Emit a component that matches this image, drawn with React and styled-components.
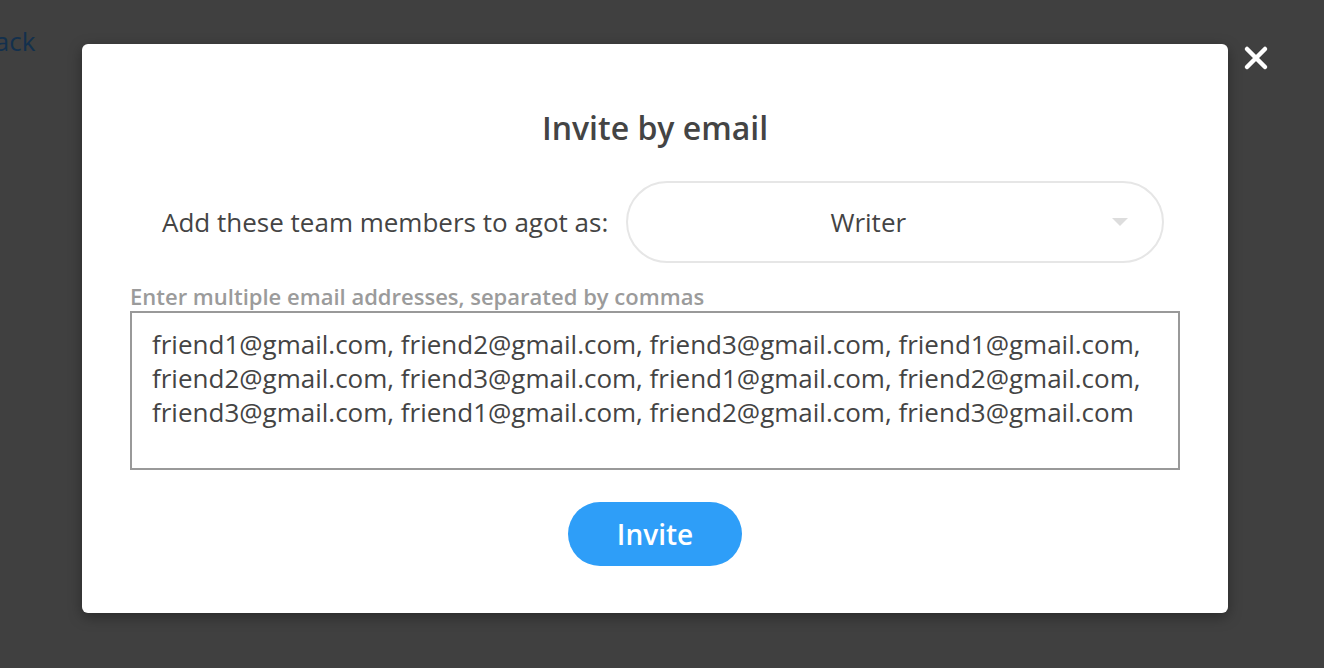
import styled, { createGlobalStyle } from "styled-components";

const GlobalStyle = createGlobalStyle`
  html, body {
    margin: 0;
    padding: 0;
    background: #404040;
    font-family: "Open Sans", "Liberation Sans", sans-serif;
  }
`;

const Page = styled.div`
  position: relative;
  width: 1324px;
  height: 668px;
  overflow: hidden;
  background: #404040;
`;

const BackLink = styled.div`
  position: absolute;
  left: -22px;
  top: 23px;
  font-size: 26px;
  color: #13304d;
`;

const Overlay = styled.div`
  position: absolute;
  inset: 0;
  display: flex;
  align-items: flex-start;
  padding: 44px 0 0 82px;
`;

const Modal = styled.div`
  width: 1146px;
  height: 569px;
  box-sizing: border-box;
  background: #fff;
  border-radius: 6px;
  box-shadow: 0 4px 14px rgb(0 0 0 / 0.35);
  padding: 60px 48px 0;
  display: flex;
  flex-direction: column;
  align-items: center;
`;

const Title = styled.h2`
  margin: 0;
  font-size: 32px;
  font-weight: 600;
  color: #444;
  line-height: 48px;
`;

const RoleRow = styled.div`
  align-self: stretch;
  display: flex;
  align-items: center;
  gap: 18px;
  padding-left: 32px;
  margin-top: 29px;
`;

const RoleLabel = styled.span`
  font-size: 26px;
  color: #444;
`;

const Select = styled.div`
  position: relative;
  width: 538px;
  height: 82px;
  box-sizing: border-box;
  border: 2px solid #e6e6e6;
  border-radius: 41px;
  padding-right: 54px;
  display: flex;
  align-items: center;
  justify-content: center;
  font-size: 26px;
  color: #444;
`;

const Caret = styled.span`
  position: absolute;
  right: 34px;
  top: 35px;
  width: 0;
  height: 0;
  border-left: 8px solid transparent;
  border-right: 8px solid transparent;
  border-top: 8px solid #ddd;
`;

const Hint = styled.div`
  align-self: stretch;
  margin-top: 18px;
  font-size: 22px;
  font-weight: 600;
  color: #9b9b9b;
  line-height: 30px;
`;

const Emails = styled.div`
  align-self: stretch;
  height: 159px;
  box-sizing: border-box;
  border: 2px solid #999;
  padding: 14px 20px;
  font-size: 26px;
  line-height: 34px;
  color: #444;
`;

const InviteButton = styled.button`
  margin-top: 32px;
  width: 174px;
  height: 64px;
  border: none;
  border-radius: 32px;
  background: #2e9ef8;
  color: #fff;
  font-family: inherit;
  font-size: 28px;
  font-weight: 600;
  cursor: pointer;
`;

const CloseButton = styled.button`
  position: absolute;
  left: 1243px;
  top: 45px;
  width: 26px;
  height: 26px;
  padding: 0;
  border: none;
  background: none;
  cursor: pointer;
`;

const emailText =
  "friend1@gmail.com, friend2@gmail.com, friend3@gmail.com, friend1@gmail.com, friend2@gmail.com, friend3@gmail.com, friend1@gmail.com, friend2@gmail.com, friend3@gmail.com, friend1@gmail.com, friend2@gmail.com, friend3@gmail.com";

const App = () => {
  return (
    <Page>
      <GlobalStyle />
      <BackLink>Back</BackLink>
      <Overlay>
        <Modal>
          <Title>Invite by email</Title>
          <RoleRow>
            <RoleLabel>Add these team members to agot as:</RoleLabel>
            <Select>
              Writer
              <Caret />
            </Select>
          </RoleRow>
          <Hint>Enter multiple email addresses, separated by commas</Hint>
          <Emails>{emailText}</Emails>
          <InviteButton>Invite</InviteButton>
        </Modal>
      </Overlay>
      <CloseButton aria-label="Close">
        <svg width="26" height="26" viewBox="0 0 26 26">
          <path
            d="M4 4 L22 22 M22 4 L4 22"
            stroke="#fff"
            strokeWidth="4.5"
            strokeLinecap="round"
          />
        </svg>
      </CloseButton>
    </Page>
  );
};

export default App;
